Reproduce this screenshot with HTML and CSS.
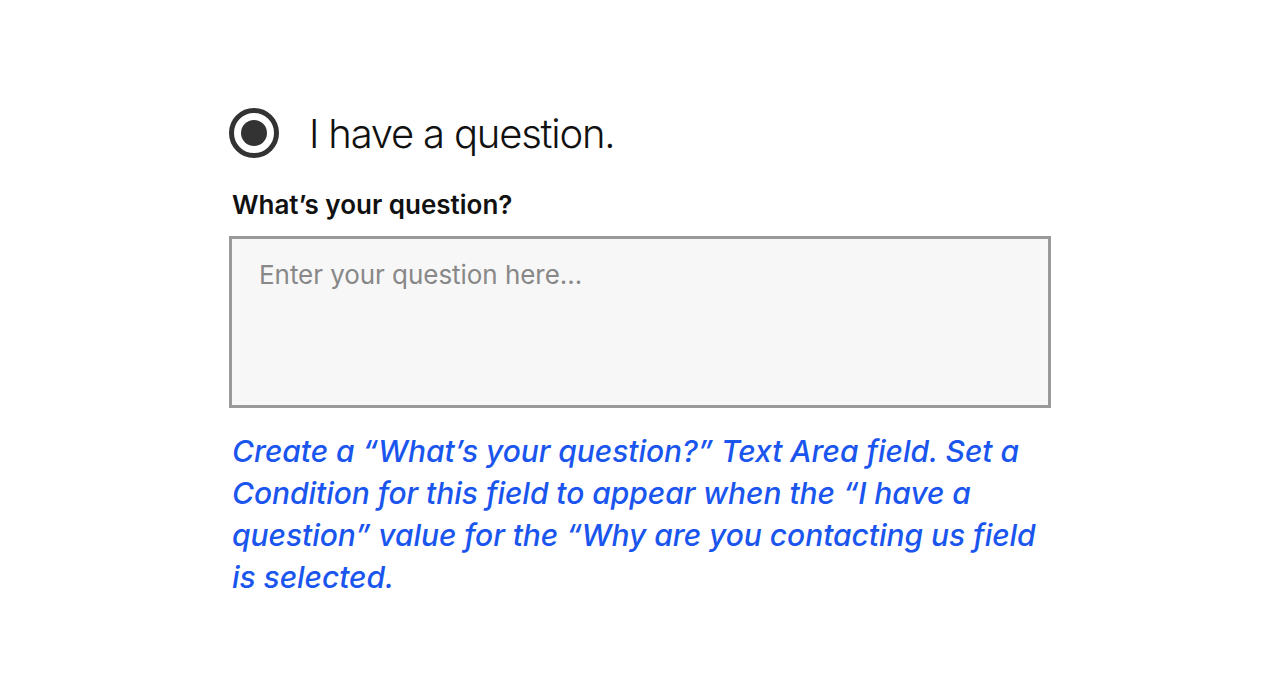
FILE: index.html
```html
<!DOCTYPE html>
<html>
<head>
<meta charset="utf-8">
<link rel="stylesheet" href="styles.css">
</head>
<body>
<main class="form">
  <div class="option">
    <span class="radio"><span class="dot"></span></span>
    <span class="option-label">I have a question.</span>
  </div>
  <label class="field-label">What’s your question?</label>
  <div class="textarea">Enter your question here...</div>
  <p class="note">Create a “What’s your question?” Text Area field. Set a Condition for this field to appear when the “I have a question” value for the “Why are you contacting us field is selected.</p>
</main>
</body>
</html>
```
FILE: styles.css
```css
html, body {
  margin: 0;
  padding: 0;
  background: #ffffff;
}
body {
  font-family: Inter, "Noto Sans", sans-serif;
  color: #111;
}
.form {
  width: 822px;
  padding: 108px 0 0 229px;
}
.option {
  display: flex;
  align-items: center;
  gap: 30px;
  height: 50px;
}
.radio {
  box-sizing: border-box;
  width: 50px;
  height: 50px;
  border: 5px solid #333;
  border-radius: 50%;
  display: flex;
  align-items: center;
  justify-content: center;
}
.dot {
  width: 26px;
  height: 26px;
  border-radius: 50%;
  background: #333;
}
.option-label {
  font-size: 40px;
  font-weight: 350;
  letter-spacing: -1.2px;
  color: #111;
}
.field-label {
  display: block;
  margin: 29px 0 0 3px;
  font-size: 26px;
  font-weight: 600;
  letter-spacing: 0;
  line-height: 36px;
}
.textarea {
  box-sizing: border-box;
  margin-top: 13px;
  height: 172px;
  border: 3px solid #999;
  background: #f7f7f7;
  padding: 20px 27px;
  font-size: 26px;
  color: #888;
  letter-spacing: -0.05px;
}
.note {
  margin: 22px 0 0 3px;
  font-size: 30px;
  font-style: italic;
  font-weight: 500;
  line-height: 42px;
  color: #1a55ee;
  letter-spacing: -0.05px;
  width: 818px;
}
```
